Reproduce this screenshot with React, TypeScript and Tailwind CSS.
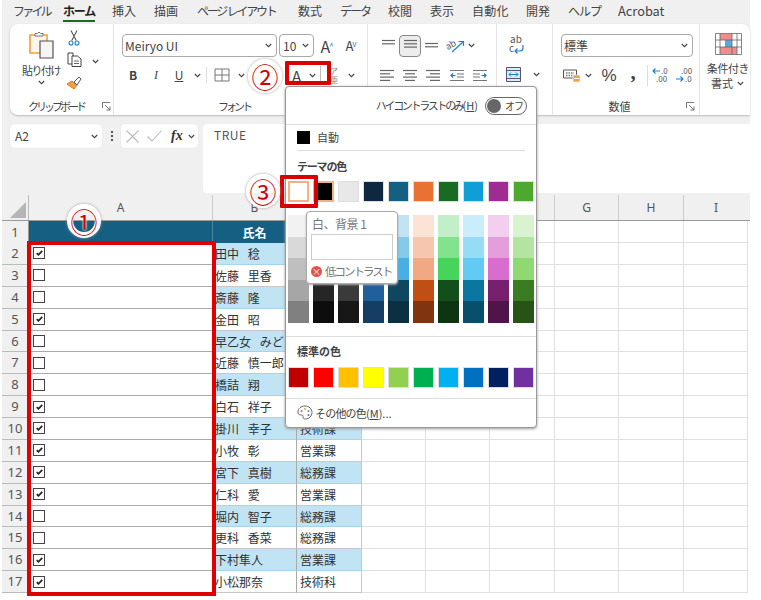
import type { ReactNode } from 'react';

const tabs = [
  { label: 'ファイル', w: 'w-[50px]', t: 'tracking-[-2.8px]' },
  { label: 'ホーム', w: 'w-[49px]', t: 'tracking-[-1.2px] font-bold text-[#222]' },
  { label: '挿入', w: 'w-[42px]', t: '' },
  { label: '描画', w: 'w-[43px]', t: '' },
  { label: 'ページ レイアウト', w: 'w-[101px]', t: 'tracking-[-2.2px]' },
  { label: '数式', w: 'w-[42px]', t: '' },
  { label: 'データ', w: 'w-[48px]', t: 'tracking-[-2px]' },
  { label: '校閲', w: 'w-[42px]', t: '' },
  { label: '表示', w: 'w-[42px]', t: '' },
  { label: '自動化', w: 'w-[54px]', t: 'tracking-[0.3px]' },
  { label: '開発', w: 'w-[42px]', t: '' },
  { label: 'ヘルプ', w: 'w-[50px]', t: 'tracking-[-1px]' },
  { label: 'Acrobat', w: 'w-[50px]', t: 'text-[12.8px]' },
];

const themeColors = [
  ['#ffffff', '#f2f2f2', '#d9d9d9', '#bfbfbf', '#a6a6a6', '#808080'],
  ['#000000', '#7f7f7f', '#595959', '#404040', '#262626', '#0d0d0d'],
  ['#e8e8e8', '#d0d0d0', '#adadad', '#757575', '#3a3a3a', '#171717'],
  ['#0e2841', '#dceaf7', '#a6caec', '#4e95d9', '#215f9a', '#163e64'],
  ['#156082', '#c1e4f5', '#83caeb', '#45b0e1', '#0f4761', '#0b3041'],
  ['#e97132', '#fbe3d6', '#f6c6ad', '#f1a983', '#c04f15', '#80350e'],
  ['#196b24', '#c1f0c8', '#83e28e', '#47d45a', '#124f1a', '#0d3512'],
  ['#0f9ed5', '#caedfb', '#95dcf7', '#61cbf3', '#0b769f', '#074f6a'],
  ['#a02b93', '#f2cfee', '#e59edc', '#d86dcd', '#77206d', '#4f1549'],
  ['#4ea72e', '#d9f2d0', '#b3e5a1', '#8ed973', '#3a7c22', '#275317'],
];

const standardColors = ['#c00000', '#ff0000', '#ffc000', '#ffff00', '#92d050', '#00b050', '#00b0f0', '#0070c0', '#002060', '#7030a0'];

const rows: [number, boolean, string, string][] = [
  [2, true, '田中 稔', ''],
  [3, false, '佐藤 里香', ''],
  [4, false, '斎藤 隆', ''],
  [5, true, '金田 昭', ''],
  [6, false, '早乙女 みどり', ''],
  [7, false, '近藤 慎一郎', ''],
  [8, false, '橋詰 翔', ''],
  [9, true, '白石 祥子', ''],
  [10, true, '掛川 幸子', '技術課'],
  [11, true, '小牧 彰', '営業課'],
  [12, true, '宮下 真樹', '総務課'],
  [13, true, '仁科 愛', '営業課'],
  [14, false, '堀内 智子', '総務課'],
  [15, false, '更科 香菜', '総務課'],
  [16, true, '下村隼人', '営業課'],
  [17, true, '小松那奈', '技術科'],
];

const Chevron = ({ className = 'w-[12px]' }: { className?: string }) => (
  <div className={`flex justify-center shrink-0 ${className}`}>
    <svg width="7" height="5" viewBox="0 0 7 5" fill="none" stroke="#444" strokeWidth="1.1">
      <path d="M0.8 1l2.7 2.7L6.2 1" />
    </svg>
  </div>
);

const Launcher = () => (
  <svg width="9" height="9" viewBox="0 0 9 9" fill="none" stroke="#666" strokeWidth="0.9" className="shrink-0">
    <path d="M0.5 6V0.5H8M3 3l5 5M8 4.5V8H4.5" />
  </svg>
);

// slot keeps each ribbon icon at its fixed horizontal spacing
const Slot = ({ w, children }: { w: string; children: ReactNode }) => (
  <div className={`flex items-center justify-center shrink-0 text-[#444] ${w}`}>{children}</div>
);

const Lines = ({ widths, color = '#666' }: { widths: [number, number][]; color?: string }) => (
  <svg width="15" height="13" viewBox="0 0 15 13" stroke={color} strokeWidth="1.2">
    {widths.map(([x, w], i) => (
      <path key={i} d={`M${x} ${1.5 + i * 3.3}h${w}`} />
    ))}
  </svg>
);

const Indent = ({ flip }: { flip?: boolean }) => (
  <svg width="14" height="13" viewBox="0 0 14 13" fill="none" strokeWidth="1.2" className={flip ? '-scale-x-100' : ''}>
    <path d="M0 1.5h14M7 5h7M7 8h7M0 11.5h14" stroke="#777" />
    <path d="M5.5 6.5H1M3 4.5l-2 2 2 2" stroke="#0f7fc9" />
  </svg>
);

const Select = ({ w, label, className = '' }: { w: string; label: string; className?: string }) => (
  <div className={`h-[23px] bg-white border border-[#a9a9a9] rounded-[4px] flex items-center pl-[2px] pr-[4px] text-[12px] text-[#444] shrink-0 ${w} ${className}`}>
    <span className="flex-1 whitespace-nowrap">{label}</span>
    <Chevron className="w-[8px]" />
  </div>
);

const GroupLabel = ({ label, launcher, w, t = '' }: { label: string; launcher?: boolean; w: string; t?: string }) => (
  <div className={`absolute bottom-[1px] left-0 flex items-center ${w}`}>
    <span className={`flex-1 text-center text-[11px] text-[#444] leading-[16px] whitespace-nowrap ${t}`}>{label}</span>
    {launcher && <Launcher />}
  </div>
);

const Check = ({ on }: { on: boolean }) => (
  <div className="w-[12px] h-[12px] border border-[#444] bg-white flex items-center justify-center ml-[4px] shrink-0">
    {on && (
      <svg width="7" height="6" viewBox="0 0 8 7" fill="none" stroke="#222" strokeWidth="2">
        <path d="M0.8 3.6l2 2L7.2 1" />
      </svg>
    )}
  </div>
);

// white band around the glyph ring, inner part lets the sheet show through
const Circled = ({ n, className }: { n: string; className: string }) => (
  <div className={`absolute w-[34px] h-[34px] rounded-full border-[6px] border-white shadow-[0_0_3px_#999] flex items-center justify-center text-[27px] leading-none text-[#d00000] [text-shadow:0_0_2px_white,0_0_2px_white] ${className}`}>
    {n}
  </div>
);

const Swatch = ({ c, className = '' }: { c: string; className?: string }) => (
  <div className={`w-[21px] h-[21px] border border-[#ddd] ${className}`} style={{ backgroundColor: c }} />
);

export default function App() {
  return (
    <div className="relative w-[761px] h-[600px] overflow-hidden bg-white font-['Noto_Sans_CJK_JP','Noto_Sans',sans-serif]">
      <div className="w-[748px] ml-[2px] bg-[#f0f0f0]">
        {/* Tabs */}
        <div className="flex h-[24px] pl-[11px] text-[12px] text-[#444] items-start pt-[3px]">
          {tabs.map((t) => (
            <div key={t.label} className={`relative whitespace-nowrap leading-[16px] shrink-0 ${t.w} ${t.t}`}>
              {t.label}
              {t.label === 'ホーム' && <div className="absolute left-0 w-[32px] top-[17px] h-[2px] bg-[#196b24]" />}
            </div>
          ))}
        </div>

        {/* Ribbon */}
        <div className="flex h-[91px] ml-[8px] w-[740px] bg-white rounded-t-lg rounded-bl-lg shadow-[0_1px_2px_#bbb]">
          {/* Clipboard */}
          <div className="relative w-[103px] shrink-0 flex">
            <div className="w-[46px] ml-[8px] flex flex-col items-center pt-[7px]">
              <svg width="27" height="28" viewBox="0 0 27 28" fill="none">
                <path d="M2 4h17v18H2z" fill="#fdf6ea" stroke="#f0a040" strokeWidth="1.6" />
                <path d="M7 5V2.5h2.5L11 1l1.5 1.5H15V5z" fill="#fff" stroke="#777" />
                <path d="M12 10h13v17H12z" fill="#f5f5f5" stroke="#555" strokeWidth="1.2" />
              </svg>
              <span className="text-[11px] leading-[14px] mt-[4px] tracking-[-1.5px] text-[#444] whitespace-nowrap">貼り付け</span>
              <Chevron className="w-[12px] mt-[3px]" />
            </div>
            <div className="flex flex-col items-center w-[20px] pt-[6px] gap-[6px]">
              <svg width="12" height="16" viewBox="0 0 12 16" fill="none" strokeWidth="1.1">
                <path d="M3 0.5l5.2 10M9 0.5L3.8 10.5" stroke="#555" />
                <circle cx="3" cy="13" r="2" stroke="#1f80cc" />
                <circle cx="9" cy="13" r="2" stroke="#1f80cc" />
              </svg>
              <svg width="15" height="15" viewBox="0 0 15 15" fill="none" stroke="#444">
                <path d="M1 1h5v11H1z" />
                <path d="M5 4h5.5L14 7v7.5H5z" fill="#fff" />
                <path d="M7 9h5M7 11.5h5" strokeWidth="0.8" />
              </svg>
              <svg width="16" height="14" viewBox="0 0 16 14" fill="none" className="mt-[3px]">
                <path d="M1 8l7 5 3-4-5-4z" fill="#f2a040" stroke="#e07a1c" />
                <path d="M8 6l5-5 2 2-4 6z" fill="#fff" stroke="#555" />
              </svg>
            </div>
            <div className="pt-[35px] ml-[7px]">
              <Chevron className="w-[8px]" />
            </div>
            <GroupLabel label="クリップボード" launcher w="w-[101px]" t="tracking-[-3px]" />
          </div>

          {/* Font */}
          <div className="relative w-[254px] shrink-0 border-l border-[#e3e3e3] pl-[8px] pt-[10px]">
            <div className="flex items-center">
              <Select w="w-[155px]" label="Meiryo UI" />
              <Select w="w-[35px]" label="10" className="ml-[2px] pl-[3px]" />
              <Slot w="w-[24px] ml-[1px]">
                <span className="text-[16px] leading-none">A<sup className="text-[#1f80cc] text-[8px] -ml-[1px]">^</sup></span>
              </Slot>
              <Slot w="w-[24px]">
                <span className="text-[13px] leading-none">A<sup className="text-[#1f80cc] text-[8px] -ml-[1px]">v</sup></span>
              </Slot>
            </div>
            <div className="flex items-center mt-[7px] h-[22px]">
              <Slot w="w-[22px]"><span className="text-[12px] font-bold">B</span></Slot>
              <Slot w="w-[24px]"><span className="text-[12px] italic font-['Liberation_Serif',serif]">I</span></Slot>
              <Slot w="w-[22px]"><span className="text-[12px] underline">U</span></Slot>
              <Chevron className="w-[14px]" />
              <div className="w-px h-[16px] bg-[#ddd] ml-[2px]" />
              <Slot w="w-[22px] ml-[4px]">
                <svg width="16" height="14" viewBox="0 0 16 14" fill="none" stroke="#777">
                  <path d="M1 1h14v12H1zM8 1v12M1 7h14" />
                </svg>
              </Slot>
              <Chevron className="w-[14px] ml-[1px]" />
              <div className="w-[41px]" />
              <div className="relative w-[15px] h-[22px] flex items-center justify-center">
                <span className="text-[15px] leading-[17px] text-[#444]">A</span>
                <div className="absolute left-0 right-0 bottom-[2px] h-[2.5px] bg-black" />
              </div>
              <Chevron className="w-[16px]" />
              <div className="w-px h-[18px] bg-[#bbb]" />
              <Slot w="w-[16px] ml-[5px]">
                <div className="flex flex-col items-center text-[8px] leading-[9px] text-[#888]">
                  <span>ア</span>
                  <span>亜</span>
                </div>
              </Slot>
              <Chevron className="w-[12px] ml-[3px]" />
            </div>
            <GroupLabel label="フォント" w="w-[240px]" t="tracking-[-3px]" />
          </div>

          {/* Alignment */}
          <div className="relative w-[129px] shrink-0 border-l border-[#e3e3e3] pl-[12px] pt-[10px]">
            <div className="flex items-center h-[23px]">
              <Slot w="w-[16px]"><Lines widths={[[1, 13], [1, 13]]} /></Slot>
              <div className="w-[22px] h-[22px] ml-[3px] border border-[#888] rounded-[4px] bg-[#ededed] flex items-center justify-center">
                <Lines widths={[[1, 13], [1, 13], [1, 13]]} />
              </div>
              <Slot w="w-[16px] ml-[2px] pt-[6px]"><Lines widths={[[1, 13], [1, 13]]} /></Slot>
              <Slot w="w-[22px] ml-[6px]">
                <svg width="20" height="16" viewBox="0 0 20 16" fill="none">
                  <text x="0" y="10" fontSize="9" fill="#555" transform="rotate(-30 5 8)">ab</text>
                  <path d="M6 14L17 4M12.5 3.5H17.5V8" stroke="#1f80cc" strokeWidth="1.2" />
                </svg>
              </Slot>
              <Chevron className="w-[8px]" />
            </div>
            <div className="flex items-center mt-[7px] h-[22px] gap-[8px]">
              <Slot w="w-[15px]"><Lines widths={[[0, 14], [0, 10], [0, 14], [0, 10]]} /></Slot>
              <Slot w="w-[15px]"><Lines widths={[[0, 14], [2, 10], [0, 14], [2, 10]]} /></Slot>
              <Slot w="w-[15px]"><Lines widths={[[0, 14], [4, 10], [0, 14], [4, 10]]} /></Slot>
              <Slot w="w-[15px]"><Indent /></Slot>
              <Slot w="w-[15px]"><Indent flip /></Slot>
            </div>
            <div className="absolute right-[-1px] bottom-[3px]">
              <Launcher />
            </div>
          </div>

          {/* Wrap / merge */}
          <div className="w-[56px] shrink-0 border-l border-[#e3e3e3] pl-[9px] pt-[9px]">
            <Slot w="w-[20px] h-[23px]">
              <svg width="17" height="20" viewBox="0 0 17 20" fill="none">
                <text x="2" y="8" fontSize="10" fill="#555">ab</text>
                <text x="1" y="17" fontSize="10" fill="#555">c</text>
                <path d="M15 10v3a3 3 0 0 1-3 3H7M9.5 13.5L7 16l2.5 2.5" stroke="#1f80cc" strokeWidth="1.2" />
              </svg>
            </Slot>
            <div className="flex items-center mt-[7px] h-[22px]">
              <svg width="15" height="15" viewBox="0 0 15 15" fill="none">
                <path d="M0.5 0.5h14v14H0.5z" fill="#d9ecf8" stroke="#557" />
                <path d="M0.5 3.5h14M0.5 11.5h14" stroke="#557" />
                <path d="M3 7.5h9M5 5.5l-2 2 2 2M10 5.5l2 2-2 2" stroke="#1f80cc" />
              </svg>
              <Chevron className="w-[12px] ml-[9px]" />
            </div>
          </div>

          {/* Number */}
          <div className="relative w-[147px] shrink-0 border-l border-[#e3e3e3] pl-[8px] pt-[10px]">
            <Select w="w-[132px]" label="標準" />
            <div className="flex items-center mt-[7px] h-[22px]">
              <Slot w="w-[20px] ml-[1px]">
                <svg width="18" height="15" viewBox="0 0 18 15" fill="none">
                  <path d="M0.5 2h13v8h-13z" stroke="#555" />
                  <path d="M3 5h8M3 7.5h8" stroke="#777" strokeWidth="1.4" strokeDasharray="1.5 1" />
                  <path d="M10 7h7v7h-7z" fill="#f2a040" stroke="#fff" strokeWidth="0.6" />
                  <path d="M11 10.5h5" stroke="#fff" />
                </svg>
              </Slot>
              <Chevron className="w-[12px]" />
              <Slot w="w-[24px] ml-[3px]"><span className="text-[17px] leading-none font-['Liberation_Sans',sans-serif]">%</span></Slot>
              <Slot w="w-[20px] ml-[2px]"><span className="text-[21px] leading-none font-bold font-['Liberation_Serif',serif] -mt-[6px]">,</span></Slot>
              <div className="w-px h-[21px] bg-[#ddd] ml-[4px]" />
              <Slot w="w-[20px] ml-[3px]">
                <svg width="20" height="16" viewBox="0 0 20 16" fill="none">
                  <path d="M9 4H2M4.5 1.5L2 4l2.5 2.5" stroke="#1f80cc" strokeWidth="1.1" />
                  <text x="10" y="7" fontSize="8" fill="#555">.0</text>
                  <text x="5" y="15" fontSize="8" fill="#555">.00</text>
                </svg>
              </Slot>
              <Slot w="w-[20px] ml-[4px]">
                <svg width="20" height="16" viewBox="0 0 20 16" fill="none">
                  <text x="6" y="7" fontSize="8" fill="#555">.00</text>
                  <path d="M1 12h7M5.5 9.5L8 12l-2.5 2.5" stroke="#1f80cc" strokeWidth="1.1" />
                  <text x="10" y="15" fontSize="8" fill="#555">.0</text>
                </svg>
              </Slot>
            </div>
            <GroupLabel label="数値" launcher w="w-[142px]" />
          </div>

          {/* Conditional format */}
          <div className="w-[51px] shrink-0 border-l border-[#e3e3e3] flex flex-col items-center pt-[9px] pl-[6px]">
            <svg width="27" height="22" viewBox="0 0 27 22" fill="none">
              <path d="M5 1h12v6H5zM5 14h17v7H5z" fill="#f28b8b" />
              <path d="M10 7h7v7h-7z" fill="#5aa8dc" />
              <path d="M0.5 0.5h26v21H0.5zM0.5 7h26M0.5 14h26M5 0.5v21M17 0.5v21M22 0.5v21" stroke="#666" strokeWidth="0.8" />
            </svg>
            <span className="text-[11px] leading-[15px] mt-[6px] text-[#444] whitespace-nowrap tracking-[-0.4px]">条件付き</span>
            <span className="text-[11px] leading-[15px] text-[#444] whitespace-nowrap flex items-center">書式<Chevron className="w-[10px] ml-[2px]" /></span>
          </div>
        </div>

        {/* Formula bar */}
        <div className="flex h-[80px] pt-[9px] pl-[8px]">
          <div className="w-[92px] h-[24px] bg-white rounded-[4px] flex items-center pl-[5px] pr-[2px] text-[12px] text-[#444] shadow-[0_0_1px_#ccc]">
            <span className="flex-1">A2</span>
            <Chevron className="w-[12px]" />
          </div>
          <div className="w-[19px] h-[24px] flex flex-col items-center justify-center gap-[2px]">
            <div className="w-[2px] h-[2px] bg-[#555]" />
            <div className="w-[2px] h-[2px] bg-[#555]" />
            <div className="w-[2px] h-[2px] bg-[#555]" />
          </div>
          <div className="w-[77px] h-[24px] bg-white rounded-[4px] flex items-center pl-[5px] shadow-[0_0_1px_#ccc]">
            <svg width="13" height="13" viewBox="0 0 13 13" stroke="#bbb" strokeWidth="1.1"><path d="M0.5 0.5l12 12M12.5 0.5l-12 12" /></svg>
            <svg width="15" height="12" viewBox="0 0 15 12" fill="none" stroke="#bbb" strokeWidth="1.1" className="ml-[8px]"><path d="M0.5 6.5l4.5 4.5 9.5-10.5" /></svg>
            <span className="text-[14px] italic font-bold leading-none text-[#333] font-['Liberation_Serif',serif] ml-[9px]">fx</span>
            <Chevron className="w-[9px] ml-[4px]" />
          </div>
          <div className="w-[547px] ml-[5px] h-[69px] bg-white rounded-l-[4px] pl-[11px] pt-[2px] text-[12px] leading-[18px] text-[#555] tracking-[0.5px]">
            TRUE
          </div>
        </div>

        {/* Column headers */}
        <div className="flex h-[25px] text-[12px] text-[#555] leading-[26px] text-center font-['Noto_Sans',sans-serif]">
          <div className="w-[27px] flex items-end justify-end pb-[2px] pr-[2px] border-r border-[#bbb]">
            <svg width="16" height="16" viewBox="0 0 16 16"><path d="M16 0v16H0z" fill="#b5b5b5" /></svg>
          </div>
          <div className="w-[184px] border-r border-[#ccc]">A</div>
          <div className="w-[84px] border-r border-[#ccc]">B</div>
          <div className="w-[65px] border-r border-[#ccc]">C</div>
          <div className="w-[64px] border-r border-[#ccc]">D</div>
          <div className="w-[64px] border-r border-[#ccc]">E</div>
          <div className="w-[65px] border-r border-[#ccc]">F</div>
          <div className="w-[64px] border-r border-[#ccc]">G</div>
          <div className="w-[65px] border-r border-[#ccc]">H</div>
          <div className="w-[64px]">I</div>
        </div>
      </div>

      {/* Sheet */}
      <div className="w-[748px] ml-[2px] bg-white text-[12px] text-[#333]">
        <div className="flex h-[23px] border-t border-[#999]">
          <div className="w-[27px] bg-[#f0f0f0] border-r border-[#999] text-center text-[13px] leading-[23px] text-[#555] font-['Noto_Sans',sans-serif]">1</div>
          <div className="w-[184px] bg-[#156082] border-r border-[#4a85a0]" />
          <div className="w-[84px] bg-[#156082] border-r border-[#4a85a0] text-center text-white font-bold leading-[23px]">氏名</div>
          <div className="w-[65px] bg-[#156082]" />
          <EmptyCells />
        </div>
        {rows.map(([n, on, name, dept]) => {
          const band = n % 2 === 0 ? 'bg-[#c1e4f5] border-[#a5d5ec]' : 'bg-white border-[#c8c8c8]';
          return (
            <div key={n} className="flex h-[21.875px]">
              <div className="w-[27px] bg-[#f0f0f0] border-r border-b border-[#bbb] text-center text-[13px] leading-[21px] text-[#555] font-['Noto_Sans',sans-serif]">{n}</div>
              <div className="w-[184px] border-r border-b border-[#aaa] flex items-center"><Check on={on} /></div>
              <div className={`w-[84px] border-r-[#aaa] border-r border-b pl-[2px] leading-[21px] whitespace-nowrap overflow-hidden [word-spacing:6px] ${band}`}>{name}</div>
              <div className={`w-[65px] border-b pl-[3px] leading-[21px] whitespace-nowrap border-r border-r-[#c8c8c8] ${band}`}>{dept}</div>
              <EmptyCells />
            </div>
          );
        })}
      </div>

      {/* Color popup */}
      <div className="absolute left-[285px] top-[86px] w-[252px] h-[342px] bg-white border border-[#999] rounded-[4px] shadow-[0_1px_3px_#999] text-[11px] text-[#444]">
        <div className="flex items-center justify-end h-[37px] pr-[9px] gap-[7px]">
          <span className="whitespace-nowrap tracking-[-2.3px]">
            ハイ コントラストのみ<span className="tracking-normal">(<span className="underline">H</span>)</span>
          </span>
          <div className="w-[42px] h-[18px] border border-[#666] rounded-full flex items-center pl-[1px] gap-[4px]">
            <div className="w-[14px] h-[14px] rounded-full bg-[#666]" />
            <span className="tracking-[-1px] text-[10px]">オフ</span>
          </div>
        </div>
        <div className="h-px bg-[#ddd]" />
        <div className="flex items-center h-[25px] pl-[11px] gap-[7px]">
          <div className="w-[13px] h-[13px] bg-black" />
          <span>自動</span>
        </div>
        <div className="h-px bg-[#ddd] mx-[11px]" />
        <div className="pl-[11px] pt-[8px] h-[30px] font-bold leading-[15px] tracking-[-1.2px]">テーマの色</div>
        <div className="flex pl-[2px] gap-[4px]">
          {themeColors.map((col, i) => (
            <Swatch key={col[0]} c={col[0]} className={i < 2 ? 'border-[2px] border-[#f4b183]' : ''} />
          ))}
        </div>
        <div className="flex pl-[2px] gap-[4px] mt-[13px]">
          {themeColors.map((col) => (
            <div key={col[0]} className="w-[21px] flex flex-col">
              {col.slice(1).map((c) => (
                <div key={c} className="h-[21.6px]" style={{ backgroundColor: c }} />
              ))}
            </div>
          ))}
        </div>
        <div className="h-px bg-[#ddd] mt-[13px]" />
        <div className="pl-[11px] pt-[7px] h-[30px] font-bold leading-[15px]">標準の色</div>
        <div className="flex pl-[2px] gap-[4px]">
          {standardColors.map((c) => (
            <Swatch key={c} c={c} />
          ))}
        </div>
        <div className="h-px bg-[#ddd] mt-[10px]" />
        <div className="flex items-center h-[28px] pl-[11px] gap-[2px]">
          <svg width="16" height="15" viewBox="0 0 16 15" fill="none">
            <path d="M8 1C4 1 1 3.5 1 7c0 3 2.5 3 4 3 1 0 1.2 1 1 2-.2 1.3 1 2 2.5 2C12 14 15 11 15 7.5 15 4 12 1 8 1z" stroke="#666" />
            <circle cx="4.5" cy="6" r="1" fill="#e05050" />
            <circle cx="8" cy="4" r="1" fill="#f0a030" />
            <circle cx="11.5" cy="6" r="1" fill="#4090d0" />
            <circle cx="11.5" cy="10" r="1" fill="#a050b0" />
          </svg>
          <span className="tracking-[-0.8px]">その他の色<span className="tracking-normal">(<span className="underline">M</span>)...</span></span>
        </div>
      </div>

      {/* Tooltip */}
      <div className="absolute left-[306px] top-[211px] w-[92px] h-[73px] bg-white border border-[#aaa] rounded-[4px] shadow-[0_1px_2px_#aaa] px-[4px] pt-[3px] text-[12px] text-[#777]">
        <div className="leading-[17px] pl-[1px] tracking-[-0.5px]">白、背景 1</div>
        <div className="h-[26px] border border-[#ccc] mt-[2px]" />
        <div className="flex items-center gap-[3px] mt-[3px] leading-[17px] whitespace-nowrap tracking-[-2px] text-[11.5px]">
          <div className="w-[11px] h-[11px] rounded-full bg-[#e0524a] text-white text-[9px] leading-[11px] text-center shrink-0 tracking-normal">×</div>
          低コントラスト
        </div>
      </div>

      {/* Callouts */}
      <div className="absolute left-[27px] top-[241px] w-[189px] h-[355px] border-[4px] border-[#e00000]" />
      <div className="absolute left-[285px] top-[61px] w-[46px] h-[24px] border-[4px] border-[#d80000] rounded-[1px]" />
      <div className="absolute left-[280px] top-[175px] w-[38px] h-[33px] border-[4px] border-[#d80000] rounded-[1px]" />
      <Circled n="①" className="left-[67px] top-[204px]" />
      <Circled n="②" className="left-[248px] top-[59px]" />
      <Circled n="③" className="left-[246px] top-[174px]" />
    </div>
  );
}

function EmptyCells() {
  return (
    <>
      {['w-[64px]', 'w-[64px]', 'w-[65px]', 'w-[64px]', 'w-[65px]', 'w-[64px]'].map((w, i) => (
        <div key={i} className={`${w} border-r border-b border-[#e0e0e0]`} />
      ))}
    </>
  );
}
